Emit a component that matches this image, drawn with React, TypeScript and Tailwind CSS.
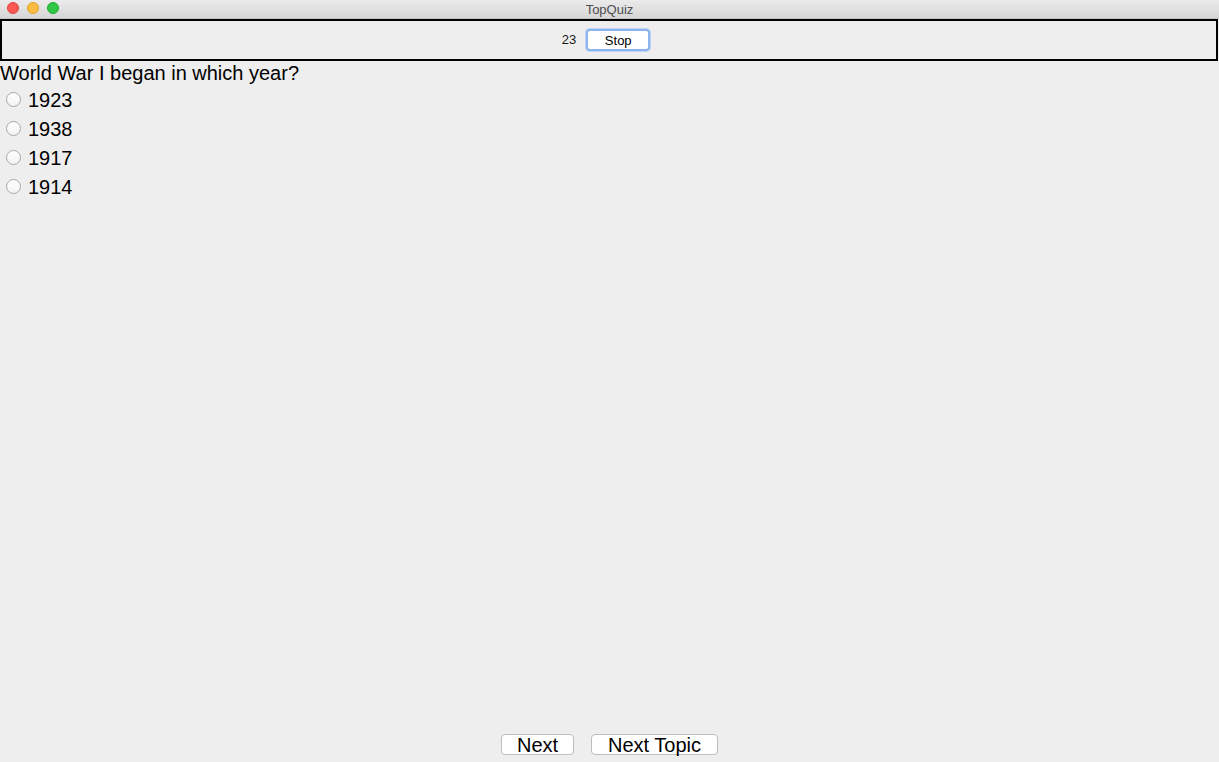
export default function App() {
  const options = ['1923', '1938', '1917', '1914'];

  return (
    <div className="flex h-[762px] w-[1219px] flex-col overflow-hidden bg-[#eeeeee] font-['Liberation_Sans',Arial,sans-serif] text-black">
      {/* title bar */}
      <div className="relative flex h-[19px] shrink-0 items-center justify-center border-b border-[#c4c4c4] bg-gradient-to-b from-[#ebebeb] to-[#d6d6d6]">
        <div className="absolute left-[7px] top-[2px] flex gap-[8px]">
          <div className="h-[12px] w-[12px] rounded-full border border-[#e0443e] bg-[#fc5753]"></div>
          <div className="h-[12px] w-[12px] rounded-full border border-[#dea123] bg-[#fdbc40]"></div>
          <div className="h-[12px] w-[12px] rounded-full border border-[#1aab29] bg-[#33c748]"></div>
        </div>
        <span className="text-[13px] leading-none text-[#4d4d4d]">TopQuiz</span>
      </div>

      {/* timer panel */}
      <div className="mr-px flex h-[42px] shrink-0 items-center justify-center gap-[10px] border-2 border-black pr-[6px]">
        <span className="text-[13px] text-[#1a1a1a]">23</span>
        <button className="h-[22px] w-[64px] rounded-[4px] border-2 border-[#8cb4ee] bg-white text-[13px] leading-none shadow-[0_0_0_1px_#bcd3f5]">
          Stop
        </button>
      </div>

      {/* question */}
      <div className="flex flex-1 flex-col">
        <div className="h-[24px] text-[20px] leading-[24px]">World War I began in which year?</div>
        <div className="flex flex-col">
          {options.map((o) => (
            <label key={o} className="flex h-[29px] items-center">
              <span className="ml-[6px] mr-[7px] h-[15px] w-[15px] rounded-full border border-[#a8a8a8] bg-gradient-to-b from-white to-[#f3f3f3]"></span>
              <span className="text-[20px] leading-none">{o}</span>
            </label>
          ))}
        </div>
      </div>

      {/* bottom buttons */}
      <div className="flex h-[28px] shrink-0 items-start justify-center gap-[17px]">
        <button className="h-[21px] w-[73px] rounded-[4px] border border-[#bdbdbd] bg-white text-[20px] leading-none">
          Next
        </button>
        <button className="h-[21px] w-[127px] rounded-[4px] border border-[#bdbdbd] bg-white text-[20px] leading-none">
          Next Topic
        </button>
      </div>
    </div>
  );
}
